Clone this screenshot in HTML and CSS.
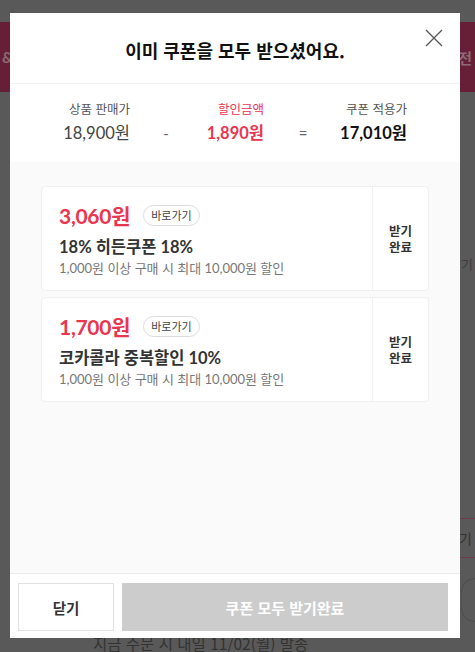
FILE: index.html
```html
<!DOCTYPE html>
<html lang="ko">
<head>
    <meta charset="UTF-8">
    <meta name="viewport" content="width=device-width, initial-scale=1.0">
    <title>쿠폰 받기</title>
    <link rel="stylesheet" href="styles.css">
</head>
<body>
    <!-- 뒤쪽 상품 페이지 (딤 처리됨) -->
    <div class="page">
        <div class="band">
            <span>&amp;</span>
            <span>전</span>
        </div>
        <div class="page-side">
            <span class="side-text">받기</span>
            <span class="side-box">기</span>
            <span class="side-circle"></span>
        </div>
        <p class="ship-note">지금 주문 시 내일 11/02(월) 발송</p>
    </div>

    <div class="modal">
        <div class="modal-head">
            <h2 class="modal-title">이미 쿠폰을 모두 받으셨어요.</h2>
            <button class="close-btn" aria-label="닫기">
                <svg width="18" height="18" viewBox="0 0 18 18">
                    <path d="M1 1 L17 17 M17 1 L1 17" stroke="#555" stroke-width="1.3" fill="none"/>
                </svg>
            </button>
        </div>

        <div class="price-sum">
            <div class="price-col">
                <span class="price-label">상품 판매가</span>
                <span class="price-value">18,900원</span>
            </div>
            <span class="price-op op-minus">-</span>
            <div class="price-col col-sale">
                <span class="price-label red">할인금액</span>
                <span class="price-value red bold">1,890원</span>
            </div>
            <span class="price-op op-eq">=</span>
            <div class="price-col col-final">
                <span class="price-label">쿠폰 적용가</span>
                <span class="price-value bold">17,010원</span>
            </div>
        </div>

        <div class="coupon-list">
            <div class="coupon">
                <div class="coupon-info">
                    <div class="coupon-top">
                        <span class="coupon-amount">3,060원</span>
                        <span class="go-badge">바로가기</span>
                    </div>
                    <div class="coupon-name">18% 히든쿠폰 18%</div>
                    <div class="coupon-desc">1,000원 이상 구매 시 최대 10,000원 할인</div>
                </div>
                <div class="coupon-state">
                    <span>받기</span>
                    <span>완료</span>
                </div>
            </div>
            <div class="coupon">
                <div class="coupon-info">
                    <div class="coupon-top">
                        <span class="coupon-amount">1,700원</span>
                        <span class="go-badge">바로가기</span>
                    </div>
                    <div class="coupon-name">코카콜라 중복할인 10%</div>
                    <div class="coupon-desc">1,000원 이상 구매 시 최대 10,000원 할인</div>
                </div>
                <div class="coupon-state">
                    <span>받기</span>
                    <span>완료</span>
                </div>
            </div>
        </div>

        <div class="modal-foot">
            <button class="btn-close">닫기</button>
            <button class="btn-all" disabled>쿠폰 모두 받기완료</button>
        </div>
    </div>
</body>
</html>
```

FILE: styles.css
```css
* {
    box-sizing: border-box;
}

body {
    margin: 0;
    width: 475px;
    height: 652px;
    overflow: hidden;
    background-color: #595959;
    font-family: Lato, "Noto Sans CJK KR", sans-serif;
    color: #222;
}

/* 딤 처리된 뒤쪽 페이지 */
.page {
    height: 652px;
    display: flex;
    flex-direction: column;
    padding-top: 22px;
    overflow: hidden;
}

.band {
    height: 70px;
    background-color: #671f37;
    display: flex;
    justify-content: space-between;
    align-items: center;
    padding: 0 3px 0 2px;
    color: #8b6a75;
    font-size: 15px;
    font-weight: 700;
}

.page-side {
    flex: 1;
    display: flex;
    flex-direction: column;
    align-items: flex-end;
    overflow: hidden;
}

.side-text {
    margin-top: 163px;
    margin-right: 2px;
    font-family: "Noto Sans CJK KR", sans-serif;
    font-size: 13px;
    line-height: 18px;
    color: #3e3e3e;
}

.side-box {
    margin-top: 245px;
    width: 16px;
    height: 40px;
    border-top: 1px solid #6d3c48;
    border-bottom: 1px solid #6d3c48;
    font-family: "Noto Sans CJK KR", sans-serif;
    font-size: 14px;
    line-height: 38px;
    color: #333;
}

.side-circle {
    margin-top: 20px;
    width: 14px;
    height: 44px;
    border: 1px solid #4e4e4e;
    border-right: none;
    border-radius: 22px 0 0 22px;
}

.ship-note {
    margin: 0 0 0 93px;
    font-family: "Noto Sans CJK KR", sans-serif;
    font-size: 15.5px;
    line-height: 17px;
    color: #333;
}

/* 모달 */
.modal {
    position: fixed;
    left: 10px;
    top: 13px;
    width: 450px;
    height: 625px;
    background-color: #fff;
    display: flex;
    flex-direction: column;
}

.modal-head {
    position: relative;
    height: 71px;
    display: flex;
    justify-content: center;
    align-items: center;
    padding-top: 4px;
    border-bottom: 1px solid #f3f3f3;
}

.modal-title {
    margin: 0;
    font-family: "Noto Sans CJK KR", sans-serif;
    font-size: 18px;
    font-weight: 700;
    color: #111;
}

.close-btn {
    position: absolute;
    top: 16px;
    right: 17px;
    width: 18px;
    height: 18px;
    padding: 0;
    border: none;
    background: none;
}

.close-btn svg {
    display: block;
}

.price-sum {
    height: 78px;
    display: flex;
    align-items: flex-start;
    padding: 16px 0 0 40px;
}

.price-col {
    width: 80px;
    display: flex;
    flex-direction: column;
    align-items: flex-end;
    gap: 4px;
}

.col-sale {
    width: 62px;
}

.col-final {
    width: 65px;
}

.price-label {
    font-family: "Noto Sans CJK KR", sans-serif;
    font-size: 12.5px;
    line-height: 18px;
    color: #555;
}

.price-value {
    font-size: 16.5px;
    line-height: 22px;
    color: #444;
    white-space: nowrap;
}

.price-value.bold {
    font-weight: 700;
    color: #111;
}

.red,
.price-value.red {
    color: #e9364f;
}

.price-op {
    width: 72px;
    margin-top: 22px;
    text-align: center;
    font-size: 15px;
    line-height: 22px;
    color: #666;
}

.op-eq {
    width: 78px;
}

.coupon-list {
    flex: 1;
    background-color: #fafafa;
    padding: 24px 31px 0 31px;
    display: flex;
    flex-direction: column;
    gap: 6px;
}

.coupon {
    height: 105px;
    display: flex;
    background-color: #fff;
    border: 1px solid #efefef;
    border-radius: 4px;
}

.coupon-info {
    flex: 1;
    padding: 16px 0 0 17px;
    border-right: 1px solid #f0f0f0;
}

.coupon-top {
    display: flex;
    align-items: center;
    gap: 13px;
    height: 24px;
}

.coupon-amount {
    font-size: 21px;
    font-weight: 700;
    letter-spacing: -0.3px;
    color: #e9364f;
}

.go-badge {
    height: 21px;
    padding: 0 7px;
    border: 1px solid #dcdcdc;
    border-radius: 11px;
    font-family: "Noto Sans CJK KR", sans-serif;
    font-size: 11px;
    line-height: 19px;
    color: #444;
}

.coupon-name {
    margin-top: 10px;
    font-size: 16.5px;
    font-weight: 700;
    line-height: 20px;
    color: #333;
}

.coupon-desc {
    margin-top: 2px;
    font-size: 13px;
    line-height: 18px;
    color: #777;
}

.coupon-state {
    width: 55px;
    display: flex;
    flex-direction: column;
    align-items: center;
    justify-content: center;
    font-family: "Noto Sans CJK KR", sans-serif;
    font-size: 12.5px;
    font-weight: 700;
    line-height: 16px;
    color: #333;
}

.modal-foot {
    height: 65px;
    display: flex;
    gap: 8px;
    padding: 9px 12px 7px 8px;
    border-top: 1px solid #ebebeb;
}

.modal-foot button {
    height: 48px;
    font-family: "Noto Sans CJK KR", sans-serif;
    font-weight: 700;
    cursor: pointer;
}

.btn-close {
    width: 96px;
    background-color: #fff;
    border: 1px solid #e2e2e2;
    font-size: 14.5px;
    color: #333;
}

.btn-all {
    flex: 1;
    background-color: #cccccc;
    border: none;
    font-size: 15px;
    color: #fff;
}
```
